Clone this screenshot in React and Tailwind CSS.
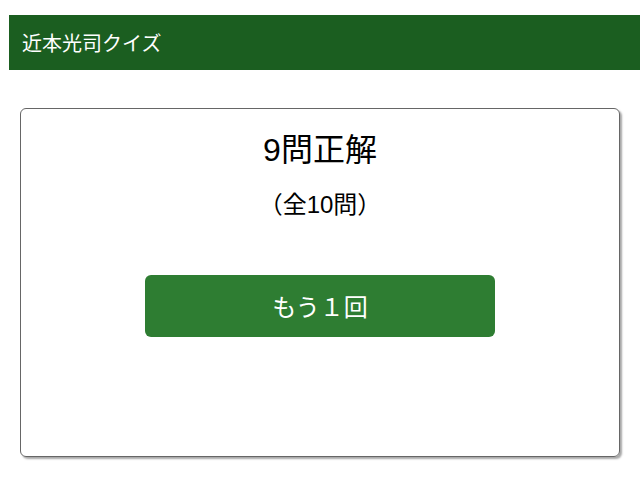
export default function App() {
  return (
    <div className="w-[640px] h-[480px] bg-white overflow-hidden pt-[15px] pl-[9px]" style={{ fontFamily: '"Liberation Sans", "Noto Sans CJK JP", sans-serif' }}>
      <div className="h-[55px] bg-[#1b5e20] flex items-center pl-[13px] text-white text-[20px]" style={{ fontFamily: '"Noto Sans CJK JP", sans-serif' }}>
        近本光司クイズ
      </div>
      <div className="mt-[38px] ml-[11px] w-[600px] h-[349px] border border-[#666] rounded-[6px] shadow-[2px_2px_2px_rgba(0,0,0,0.35)] flex flex-col items-center">
        <div className="mt-[21px] text-[32px] leading-[40px] text-black">9問正解</div>
        <div className="mt-[19px] text-[24px] leading-[32px] text-black">（全10問）</div>
        <button className="mt-[54px] w-[350px] h-[62px] bg-[#2e7d32] rounded-[6px] text-white text-[24px] flex items-center justify-center" style={{ fontFamily: '"Noto Sans CJK JP", sans-serif' }}>
          もう１回
        </button>
      </div>
    </div>
  );
}
